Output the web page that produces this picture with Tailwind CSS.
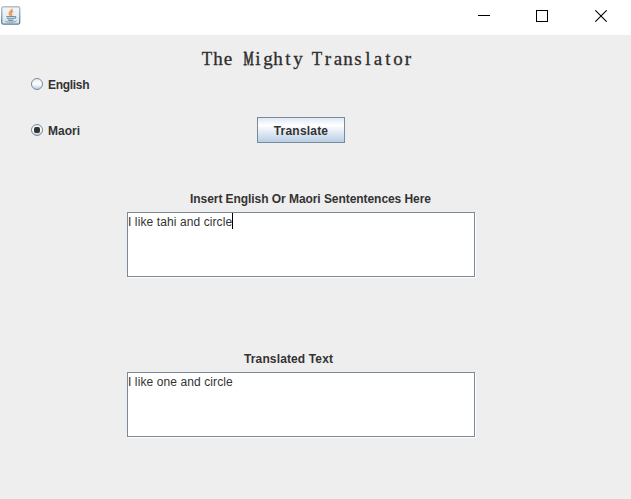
<!DOCTYPE html>
<html lang="en">
<head>
<meta charset="utf-8">
<title>The Mighty Translator</title>
<script src="https://cdn.jsdelivr.net/npm/@tailwindcss/browser@4"></script>
</head>
<body class="flex h-[499px] w-[631px] flex-col overflow-hidden bg-[#eeeeee] font-['Liberation_Sans',Arial,sans-serif] text-[12px] leading-[16px] text-[#333333]">
  <header class="flex h-[35px] shrink-0 items-start justify-between bg-white">
    <svg class="mt-[6px] ml-px" width="20" height="19" viewBox="0 0 20 19" fill="none">
      <defs><linearGradient id="tile" x1="0" y1="0" x2="0" y2="1"><stop stop-color="#f4f7f9"/><stop offset=".5" stop-color="#e8eef2"/><stop offset="1" stop-color="#d3e0e9"/></linearGradient>
      <linearGradient id="edge" x1="0" y1="0" x2="0" y2="1"><stop stop-color="#b4bfc8"/><stop offset="1" stop-color="#557d99"/></linearGradient></defs>
      <rect x=".75" y=".75" width="18" height="17.3" rx="1.5" fill="url(#tile)" stroke="url(#edge)" stroke-width="1.3"/>
      <path d="M10.8 2.8C11.5 5 7.5 5.8 8.3 8L9.5 9.8M12.2 5.2C9.8 6.2 9.5 7.3 10.6 8.3 11 9 10.5 9.5 10.2 9.8" stroke="#ee9a55" stroke-width="1.6"/>
      <path d="M5.3 10.6H13.2M6 12.2C8 13 11 13 13 12.2M6.8 14C8.5 14.7 11 14.7 12.4 14M13.2 10.7C15.4 10 15.2 12 13.4 12.6" stroke="#6f91ab" stroke-width="1.1"/>
      <path d="M4 15C4.5 16.5 13.5 16.6 15.5 15" stroke="#7e9cb3"/>
    </svg>
    <div class="mt-[10px] mr-[24px] flex">
      <svg class="mr-[46px]" width="12" height="12" shape-rendering="crispEdges"><path d="M0 5.5H12" stroke="#000"/></svg>
      <svg class="mr-[47px]" width="12" height="12" shape-rendering="crispEdges"><rect x=".5" y=".5" width="11" height="11" fill="none" stroke="#000"/></svg>
      <svg width="12" height="12"><path d="M.3 .3L11.7 11.7M11.7 .3L.3 11.7" stroke="#000" stroke-width="1.1"/></svg>
    </div>
  </header>

  <main class="flex flex-col">
    <h1 class="mt-[12px] ml-[203px] h-[24px] whitespace-pre font-['Liberation_Serif',serif] text-[19px] leading-[24px] font-normal text-[#2b2b2b] [-webkit-text-stroke:0.3px_#333333] *:inline-block *:w-[10px] *:text-center"><span class="-indent-px"><span class="-mx-px inline-block scale-x-90">T</span></span><span>h</span><span>e</span><span> </span><span><span class="-mx-[4px] inline-block scale-x-60 [-webkit-text-stroke:0.8px_#333333]">M</span></span><span>i</span><span>g</span><span>h</span><span>t</span><span>y</span><span> </span><span class="-indent-px"><span class="-mx-px inline-block scale-x-90">T</span></span><span>r</span><span>a</span><span>n</span><span>s</span><span>l</span><span>a</span><span>t</span><span>o</span><span>r</span></h1>

    <label class="mt-[5px] ml-[31px] flex h-[16px] items-center gap-[5px] font-bold">
      <span class="size-[12px] rounded-full border border-[#7a8a99] bg-linear-to-b from-[#e4edf5] via-white to-[#b8cfe5]"></span><span class="mt-px tracking-[-0.3px]">English</span>
    </label>
    <div class="mt-[25px] ml-[31px] flex h-[26px] items-center">
      <label class="flex h-[16px] w-[226px] items-center gap-[5px] font-bold">
        <span class="flex size-[12px] items-center justify-center rounded-full border border-[#7a8a99] bg-linear-to-b from-[#e4edf5] via-white to-[#b8cfe5]"><span class="size-[6px] rounded-[2px] bg-[#333333]"></span></span><span class="mt-px">Maori</span>
      </label>
      <button class="h-[26px] w-[88px] border border-[#7a8a99] bg-linear-to-b from-[#dde8f3] via-white via-30% to-[#b8cfe5] pt-px font-bold tracking-[0.2px]">Translate</button>
    </div>

    <h2 class="mt-[48px] ml-[190px] h-[16px] font-bold tracking-[-0.06px] whitespace-nowrap">Insert English Or Maori Sententences Here</h2>
    <div class="mt-[5px] ml-[127px] flex h-[65px] w-[348px] border border-[#7a8a99] bg-white shadow-[1px_1px_0_#fff]">
      <span class="mt-px h-[16px] tracking-[0.1px] whitespace-nowrap">I like tahi and circle</span><span class="h-[16px] w-px bg-black"></span>
    </div>

    <h2 class="mt-[74px] ml-[244px] h-[16px] font-bold tracking-[0.13px] whitespace-nowrap">Translated Text</h2>
    <div class="mt-[5px] ml-[127px] flex h-[65px] w-[348px] border border-[#7a8a99] bg-white shadow-[1px_1px_0_#fff]">
      <span class="mt-px h-[16px] tracking-[0.1px] whitespace-nowrap">I like one and circle</span>
    </div>
  </main>
</body>
</html>
